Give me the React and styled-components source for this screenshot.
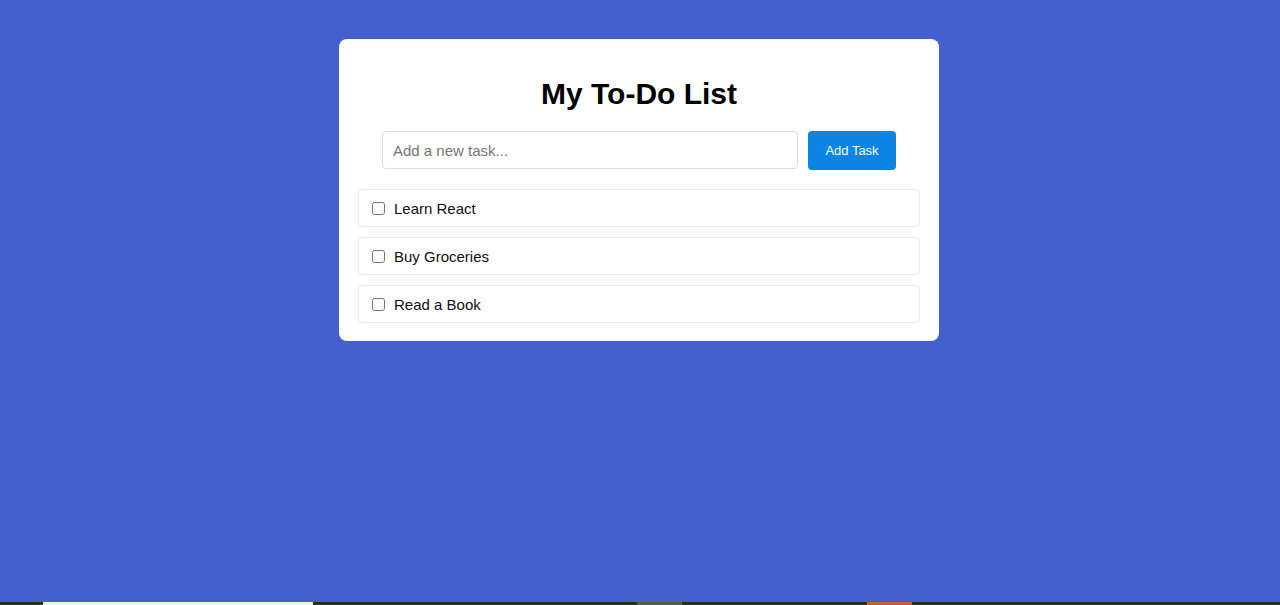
import React, { useState } from 'react';
import styled, { createGlobalStyle } from 'styled-components';

const GlobalStyle = createGlobalStyle`
  html, body {
    margin: 0;
    padding: 0;
  }

  body {
    font-family: "Liberation Sans", Arial, sans-serif;
    background: #4560ce;
  }
`;

const Page = styled.div`
  min-height: 605px;
  display: flex;
  flex-direction: column;
  background: #4560ce;
`;

const Main = styled.main`
  flex: 1;
  display: flex;
  justify-content: center;
  align-items: flex-start;
  padding: 39px 2px 0 0;
`;

const Card = styled.div`
  width: 600px;
  box-sizing: border-box;
  background: #fff;
  border-radius: 8px;
  padding: 20px 19px 18px 19px;
`;

const Title = styled.h1`
  margin: 18px 0 20px;
  text-align: center;
  font-size: 30px;
  font-weight: 700;
  color: #000;
`;

const Form = styled.form`
  display: flex;
  justify-content: center;
  gap: 10px;
  margin-bottom: 19px;
`;

const Input = styled.input`
  width: 416px;
  height: 38px;
  box-sizing: border-box;
  padding: 0 10px;
  border: 1px solid #ddd;
  border-radius: 4px;
  font-family: inherit;
  font-size: 15px;
  color: #222;
  outline: none;

  &::placeholder {
    color: #757575;
  }
`;

const Button = styled.button`
  width: 88px;
  height: 39px;
  border: none;
  border-radius: 4px;
  background: #0b84e3;
  color: #fff;
  font-family: inherit;
  font-size: 13px;
  cursor: pointer;
`;

const List = styled.ul`
  list-style: none;
  margin: 0;
  padding: 0;
  display: flex;
  flex-direction: column;
  gap: 10px;
`;

const Item = styled.li`
  height: 38px;
  box-sizing: border-box;
  display: flex;
  align-items: center;
  padding: 0 10px;
  border: 1px solid #ececec;
  border-radius: 4px;
  font-size: 15px;
  color: #111;
`;

const Check = styled.input`
  width: 13px;
  height: 13px;
  margin: 0 9px 0 3px;
`;

const Label = styled.span`
  text-decoration: ${p => (p.$done ? 'line-through' : 'none')};
`;

const Taskbar = styled.div`
  height: 3px;
  display: flex;
  background: #2f2a20;
`;

const Seg = styled.div`
  width: ${p => p.$w}px;
  margin-left: ${p => p.$ml}px;
  background: ${p => p.$c};
`;

const initial = [
  { id: 1, text: 'Learn React', done: false },
  { id: 2, text: 'Buy Groceries', done: false },
  { id: 3, text: 'Read a Book', done: false },
];

const App = () => {
  const [tasks, setTasks] = useState(initial);
  const [value, setValue] = useState('');

  const add = e => {
    e.preventDefault();
    if (!value.trim()) return;
    setTasks([...tasks, { id: Date.now(), text: value.trim(), done: false }]);
    setValue('');
  };

  const toggle = id =>
    setTasks(tasks.map(t => (t.id === id ? { ...t, done: !t.done } : t)));

  return (
    <Page>
      <GlobalStyle />
      <Main>
        <Card>
          <Title>My To-Do List</Title>
          <Form onSubmit={add}>
            <Input
              placeholder="Add a new task..."
              value={value}
              onChange={e => setValue(e.target.value)}
            />
            <Button type="submit">Add Task</Button>
          </Form>
          <List>
            {tasks.map(t => (
              <Item key={t.id}>
                <Check type="checkbox" checked={t.done} onChange={() => toggle(t.id)} />
                <Label $done={t.done}>{t.text}</Label>
              </Item>
            ))}
          </List>
        </Card>
      </Main>
      <Taskbar>
        <Seg $ml={43} $w={270} $c="#f0f0f0" />
        <Seg $ml={324} $w={45} $c="#5a5650" />
        <Seg $ml={185} $w={45} $c="#b5692e" />
      </Taskbar>
    </Page>
  );
};

export default App;
